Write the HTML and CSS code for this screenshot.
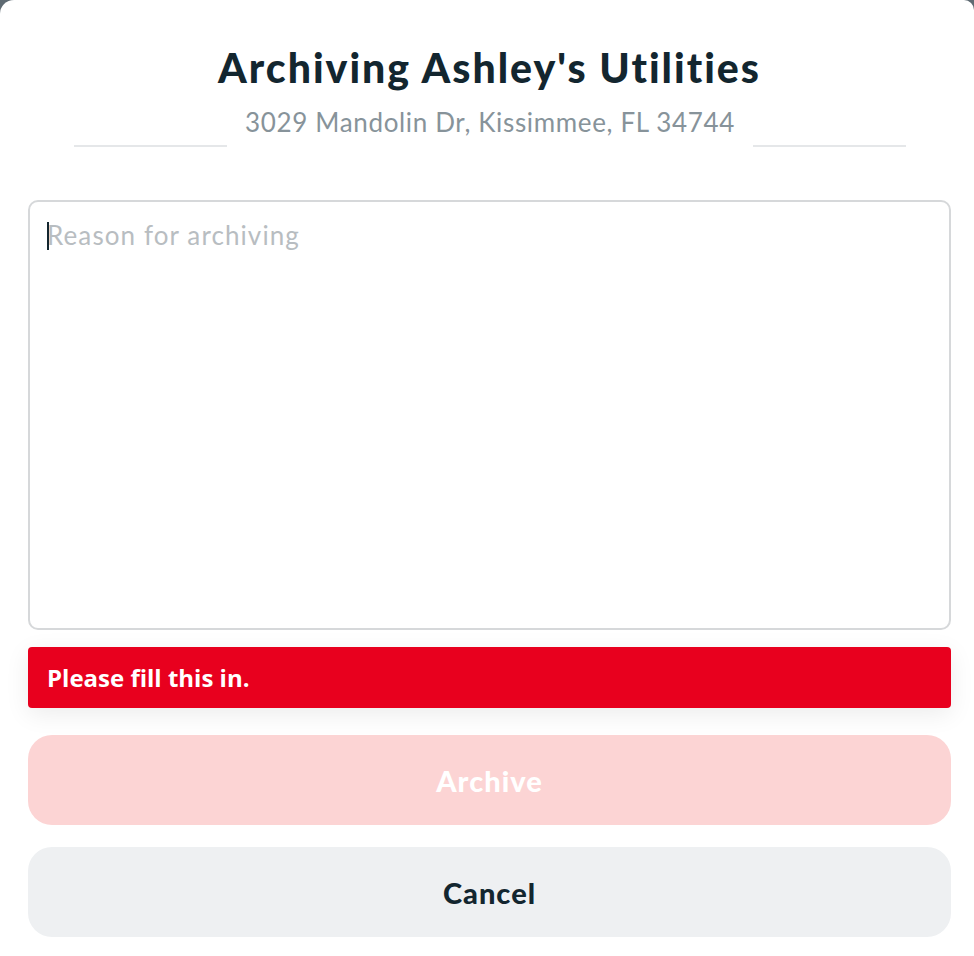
FILE: index.html
```html
<!DOCTYPE html>
<html lang="en">
<head>
<meta charset="UTF-8" />
<meta name="viewport" content="width=device-width, initial-scale=1" />
<title>Archive Utilities</title>
<link rel="stylesheet" href="styles.css">
</head>
<body>

<form class="sheet" novalidate>
  <h1 class="sheet-title">Archiving Ashley's Utilities</h1>
  <div class="sheet-sub">
    <span class="rule"></span>
    <span class="address">3029 Mandolin Dr, Kissimmee, FL 34744</span>
    <span class="rule"></span>
  </div>

  <div class="field">
    <textarea id="reason" name="reason" placeholder="Reason for archiving" required></textarea>
    <span class="caret"></span>
  </div>

  <p class="error">Please fill this in.</p>

  <button type="submit" class="btn btn-archive">Archive</button>
  <button type="button" class="btn btn-cancel">Cancel</button>
</form>

</body>
</html>
```

FILE: styles.css
```css
body {
  margin: 0;
  background: #5e6a72;
  font-family: Lato, "Open Sans", sans-serif;
}
.sheet {
  background: #fff;
  min-height: 956px;
  border-radius: 14px 10px 0 0;
  padding: 44px 23px 0 28px;
  box-sizing: border-box;
  display: flex;
  flex-direction: column;
}
.sheet-title {
  margin: 0;
  text-align: center;
  font-size: 41px;
  line-height: 48px;
  letter-spacing: 2px;
  font-weight: 900;
  color: #13262f;
}
.sheet-sub {
  display: flex;
  align-items: flex-end;
  padding: 0 45px 0 46px;
  height: 55px;
}
.rule {
  flex: 1;
  height: 2px;
  background: #e5e7e9;
}
.address {
  margin: 0 18px;
  font-size: 26px;
  line-height: 40px;
  letter-spacing: 0.65px;
  color: #87939a;
  align-self: center;
  padding-top: 4px;
}
.field {
  position: relative;
  margin-top: 53px;
}
textarea {
  display: block;
  width: 100%;
  height: 430px;
  box-sizing: border-box;
  border: 2px solid #d6d8da;
  border-radius: 10px;
  padding: 16px 17px;
  font-family: Lato, sans-serif;
  font-size: 26px;
  line-height: 34px;
  letter-spacing: 1.1px;
  color: #13262f;
  resize: none;
  outline: none;
}
textarea::placeholder {
  color: #b8bdc1;
}
.caret {
  position: absolute;
  left: 19px;
  top: 22px;
  width: 2px;
  height: 28px;
  background: #13262f;
}
.error {
  margin: 17px 0 0;
  height: 61px;
  box-sizing: border-box;
  padding: 0 19px;
  display: flex;
  align-items: center;
  background: #e8001e;
  border-radius: 4px;
  box-shadow: 0 6px 24px rgba(0,0,0,0.08);
  color: #fff;
  font-family: "Open Sans", sans-serif;
  font-weight: 700;
  font-size: 24px;
}
.btn {
  display: block;
  width: 100%;
  height: 90px;
  border: none;
  border-radius: 24px;
  font-family: Lato, sans-serif;
  font-size: 29px;
  font-weight: 900;
  letter-spacing: 1px;
  cursor: pointer;
}
.btn-archive {
  margin-top: 27px;
  background: #fcd4d4;
  color: #fff;
}
.btn-cancel {
  margin-top: 22px;
  background: #eef0f2;
  color: #13262f;
}
```
